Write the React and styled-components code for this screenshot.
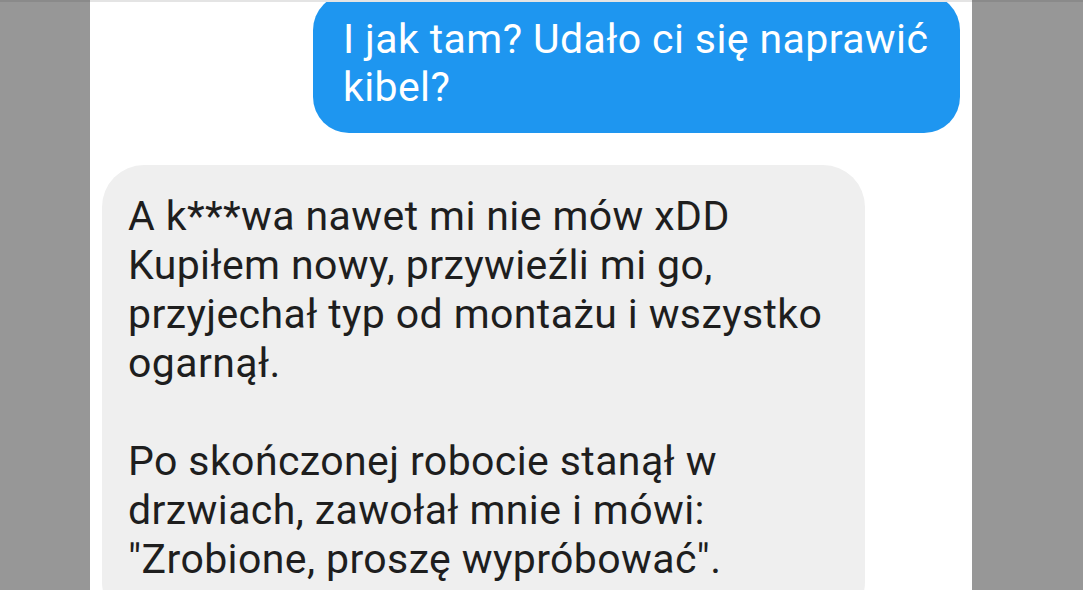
import React from "react";
import styled, { createGlobalStyle } from "styled-components";

const Global = createGlobalStyle`
  html, body { margin: 0; padding: 0; background: #979797; }
  body { font-family: Roboto, "Noto Sans", sans-serif; }
`;

const Page = styled.div`
  display: flex;
  width: 1083px;
  height: 590px;
  overflow: hidden;
  background: #979797;
`;

const Side = styled.div`
  flex: 0 0 ${(p) => p.$w}px;
  border-top: 2px solid #8a8a8a;
  box-sizing: border-box;
`;

const Screen = styled.div`
  flex: 0 0 882px;
  background: #ffffff;
  border-top: 2px solid #e4e4e4;
  box-sizing: border-box;
  overflow: hidden;
  display: flex;
  flex-direction: column;
  gap: 32px;
  padding: 0 12px 0 12px;
`;

const Bubble = styled.div`
  font-size: 41px;
  white-space: pre-line;
  box-sizing: border-box;
  letter-spacing: 0.4px;
  flex-shrink: 0;
  ${(p) =>
    p.$out
      ? `
    align-self: flex-end;
    background: #1e96f0;
    color: #ffffff;
    width: 647px;
    margin-top: -8px;
    line-height: 48px;
    padding: 21px 20px 22px 30px;
    border-radius: 36px;
  `
      : `
    align-self: flex-start;
    background: #efefef;
    color: #1e1e1e;
    width: 763px;
    line-height: 49px;
    padding: 27px 20px 40px 26px;
    border-radius: 42px;
  `}
`;

export default function App() {
  return (
    <>
      <Global />
      <Page>
        <Side $w={90} />
        <Screen>
          <Bubble $out>{"I jak tam? Udało ci się naprawić\nkibel?"}</Bubble>
          <Bubble>
            {"A k***wa nawet mi nie mów xDD\nKupiłem nowy, przywieźli mi go,\nprzyjechał typ od montażu i wszystko\nogarnął.\n\nPo skończonej robocie stanął w\ndrzwiach, zawołał mnie i mówi:\n\"Zrobione, proszę wypróbować\"."}
          </Bubble>
        </Screen>
        <Side $w={111} />
      </Page>
    </>
  );
}
